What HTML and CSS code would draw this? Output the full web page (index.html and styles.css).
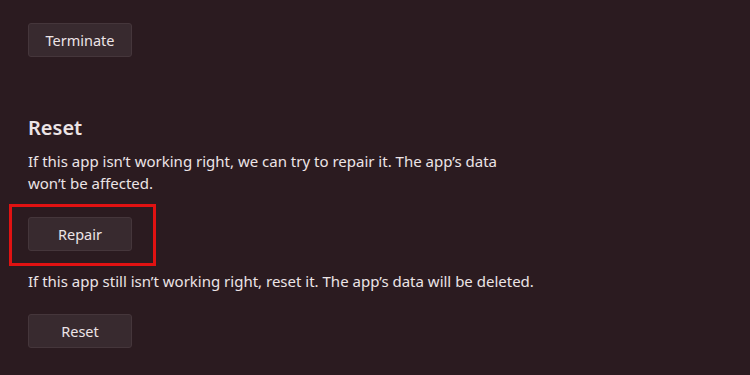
FILE: index.html
```html
<!DOCTYPE html>
<html>
<head>
<meta charset="utf-8">
<link rel="stylesheet" href="styles.css">
</head>
<body>
<main class="page">
  <button class="btn">Terminate</button>
  <section class="reset">
    <h2 class="title">Reset</h2>
    <p class="desc desc-first">If this app isn’t working right, we can try to repair it. The app’s data<br>won’t be affected.</p>
    <div class="highlight">
      <button class="btn">Repair</button>
    </div>
    <p class="desc desc-second">If this app still isn’t working right, reset it. The app’s data will be deleted.</p>
    <button class="btn">Reset</button>
  </section>
</main>
</body>
</html>
```

FILE: styles.css
```css
html, body {
  margin: 0;
  padding: 0;
  height: 100%;
}
body {
  background: #2b1b20;
  color: #ece4e6;
  font-family: "Noto Sans", sans-serif;
  overflow: hidden;
}
.page {
  display: flex;
  flex-direction: column;
  align-items: flex-start;
  padding: 23px 0 0 28px;
}
.btn {
  box-sizing: border-box;
  width: 104px;
  height: 34px;
  background: #382a2f;
  border: 1px solid #45363b;
  border-radius: 3px;
  color: #ece4e6;
  font-family: inherit;
  font-size: 14.5px;
  padding: 0;
}
.reset {
  display: flex;
  flex-direction: column;
  align-items: flex-start;
  margin-top: 57px;
}
.title {
  margin: 0;
  font-size: 20px;
  line-height: 28px;
  font-weight: 600;
}
.desc {
  margin: 8px 0 0;
  font-size: 15px;
  line-height: 22px;
}
.highlight {
  position: relative;
  margin-top: 23px;
}
.highlight::after {
  content: "";
  position: absolute;
  left: -19px;
  top: -13px;
  right: -24px;
  bottom: -15px;
  border: 3px solid #e01212;
  box-sizing: border-box;
}
.desc-second {
  margin-top: 19px;
  margin-bottom: 22px;
}
```
